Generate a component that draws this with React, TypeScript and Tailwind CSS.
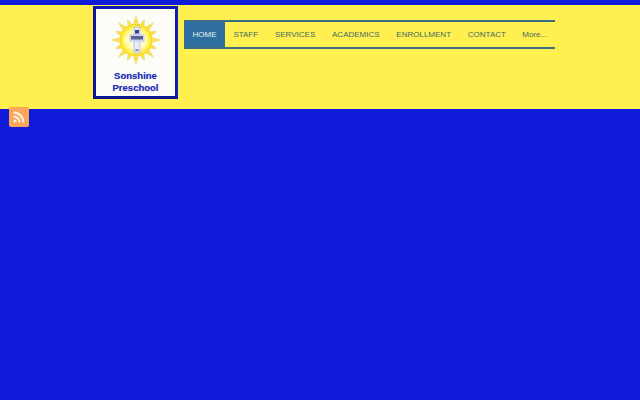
const items = ["STAFF", "SERVICES", "ACADEMICS", "ENROLLMENT", "CONTACT"];

function Sun() {
  const rays = Array.from({ length: 16 }, (_, i) => i * 22.5);
  return (
    <svg width="50" height="50" viewBox="0 0 50 50" className="block blur-[0.3px]">
      <defs>
        <radialGradient id="sunFill" cx="50%" cy="50%" r="50%">
          <stop offset="0%" stopColor="#fffff4" />
          <stop offset="60%" stopColor="#fffcb8" />
          <stop offset="88%" stopColor="#ffee38" />
          <stop offset="100%" stopColor="#f7d52a" />
        </radialGradient>
      </defs>
      {rays.map((a, i) => (
        <polygon key={a} points={i % 2 === 0 ? "25,0.5 27.8,10.5 22.2,10.5" : "25,3 27.8,10.5 22.2,10.5"} fill="#fbe34e" stroke="#e0c24a" strokeWidth="0.4" transform={`rotate(${a} 25 25)`} />
      ))}
      <circle cx="25" cy="25" r="16" fill="url(#sunFill)" stroke="#f3d02c" strokeWidth="0.5" />
      <rect x="23" y="12" width="6" height="26" fill="#e6eafa" stroke="#8d98cc" strokeWidth="0.5" />
      <rect x="19" y="20" width="14" height="6" fill="#e6eafa" stroke="#8d98cc" strokeWidth="0.5" />
      <rect x="24" y="15" width="4" height="3.5" fill="#3a4180" />
      <rect x="20" y="21" width="12" height="3.6" fill="#3a4180" opacity="0.8" />
      <rect x="24.5" y="34.5" width="3" height="1.4" fill="#5d648f" />
    </svg>
  );
}

export default function App() {
  return (
    <div className="relative h-[400px] w-[640px] overflow-hidden bg-[#101ada] font-['Liberation_Sans',Arial,sans-serif]">
      <header className="mt-[5px] flex h-[104px] items-start bg-[#fff04f] pl-[93px]">
        <div className="mt-px flex h-[93px] w-[85px] shrink-0 flex-col items-center border-[3px] border-[#101ab8] border-b-[#0f1790] border-l-[#0f1790] bg-[#fdfdf8]">
          <div className="mt-[6px]"><Sun /></div>
          <div className="mt-[5px] text-center text-[9.5px] font-bold leading-[12px] text-[#1c2bb0] [text-shadow:0_0_1px_#9aa0e8]">
            Sonshine
            <br />
            Preschool
          </div>
        </div>
        <nav className="ml-[6px] mt-[15px] flex h-[29px] w-[371px] shrink-0 items-center border-y-2 border-[#3a6f80] text-[8px] text-[#3f6a62]">
          <a className="flex h-full w-[41px] shrink-0 items-center justify-center bg-[#2e6ea0] text-[#e8f2f2]">HOME</a>
          <div className="flex h-full items-center">
            {items.map((t) => (
              <a key={t} className="shrink-0 px-[8.4px]">{t}</a>
            ))}
            <a className="shrink-0 px-[8px]">More...</a>
          </div>
        </nav>
      </header>
      <div className="absolute left-[9px] top-[107px] flex h-[20px] w-[20px] items-center justify-center rounded-[2px] bg-[#fba65b]">
        <svg width="14" height="14" viewBox="0 0 14 14" fill="none" stroke="#fff3e0" strokeWidth="2">
          <circle cx="3" cy="11" r="1.6" fill="#fff3e0" stroke="none" />
          <path d="M1.5 6.5a6 6 0 0 1 6 6" />
          <path d="M1.5 2.5a10 10 0 0 1 10 10" />
        </svg>
      </div>
    </div>
  );
}
